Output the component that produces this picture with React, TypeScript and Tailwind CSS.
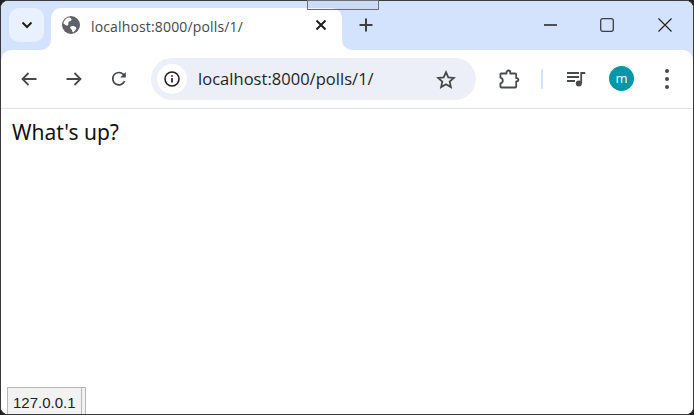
import { ReactNode } from "react";

function ToolButton({ className = "", children }: { className?: string; children: ReactNode }) {
  return <div className={`flex items-center justify-center shrink-0 ${className}`}>{children}</div>;
}

function TabBar() {
  return (
    <div className="h-[49px] flex bg-[#d3e3fd] pt-[7px] shrink-0">
      <div className="ml-[8px] mr-[7px] w-[35px] h-[34px] rounded-[10px] bg-[#e9f1fe] flex items-center justify-center shrink-0">
        <svg width="12" height="8" viewBox="0 0 12 8" fill="none">
          <path d="M1.5 1.5 6 6l4.5-4.500" stroke="#1f1f1f" strokeWidth="2" />
        </svg>
      </div>
      <div className="relative w-[291px] h-[42px] bg-white rounded-t-[10px] flex items-center pl-[11px] shrink-0">
        <div className="absolute -left-[10px] bottom-0 w-[10px] h-[10px] bg-white">
          <div className="w-full h-full bg-[#d3e3fd] rounded-br-[10px]" />
        </div>
        <div className="absolute -right-[10px] bottom-0 w-[10px] h-[10px] bg-white">
          <div className="w-full h-full bg-[#d3e3fd] rounded-bl-[10px]" />
        </div>
        <svg width="18" height="18" viewBox="0 0 18 18" className="shrink-0 -mt-[9px]">
          <circle cx="9" cy="9" r="9" fill="#5f6368" />
          <path d="M7 1.200C8.500 2 10 2.500 9.500 4 9 5.500 7.200 5 6.500 6.200 6 7.200 6.800 8.300 6 9.200 5 10 3.500 9.500 1.300 7.200 2 4.200 4.200 2 7 1.200ZM9.500 10.200c1.500-.4 3.500.2 4.700 1.300.6.7-.2 2.500-3 5-.8-.3-1-1.200-1.200-2.200-.2-1.200-1.700-1.600-1.800-2.600 0-.7.5-1.200 1.300-1.500Z" fill="#fff" />
        </svg>
        <span className="ml-[11px] text-[14px] tracking-[0.15px] text-[#45484c] font-['Open_Sans',sans-serif] whitespace-nowrap -mt-[5px]">localhost:8000/polls/1/</span>
        <svg width="12" height="12" viewBox="0 0 12 12" className="absolute left-[264px] top-[11px]" fill="none">
          <path d="M1.500 1.500l9 9M10.500 1.500l-9 9" stroke="#1f1f1f" strokeWidth="2" />
        </svg>
      </div>
      <ToolButton className="ml-[16px] w-[16px] h-[34px]">
        <svg width="14" height="14" viewBox="0 0 14 14" fill="none">
          <path d="M7 .5v13M.5 7h13" stroke="#3d4043" strokeWidth="2" />
        </svg>
      </ToolButton>
      <div className="ml-auto flex h-[34px] items-center mr-[21px]">
        <svg width="13" height="2" viewBox="0 0 13 2">
          <path d="M0 1h13" stroke="#1f1f1f" strokeWidth="1.500" />
        </svg>
        <svg width="14" height="14" viewBox="0 0 14 14" fill="none" className="ml-[43px]">
          <rect x=".7" y=".7" width="12.600" height="12.600" rx="2" stroke="#3a3f46" strokeWidth="1.300" />
        </svg>
        <svg width="14" height="14" viewBox="0 0 14 14" fill="none" className="ml-[44px]">
          <path d="M.5.5l13 13M13.500.5l-13 13" stroke="#1f1f1f" strokeWidth="1.100" />
        </svg>
      </div>
    </div>
  );
}

function Toolbar() {
  return (
    <div className="bg-[#d3e3fd] shrink-0">
      <div className="h-[58px] bg-white rounded-t-[10px] flex items-center">
        <ToolButton className="ml-[19px] w-[18px] h-[18px]">
          <svg width="16" height="14" viewBox="0 0 16 14" fill="none">
            <path d="M15.500 7H1.500M7.500 1 1.500 7l6 6" stroke="#474a4d" strokeWidth="1.800" />
          </svg>
        </ToolButton>
        <ToolButton className="ml-[27px] w-[18px] h-[18px]">
          <svg width="16" height="14" viewBox="0 0 16 14" fill="none">
            <path d="M.5 7h14M8.500 1l6 6-6 6" stroke="#474a4d" strokeWidth="1.800" />
          </svg>
        </ToolButton>
        <ToolButton className="ml-[27px] w-[18px] h-[18px]">
          <svg width="16" height="16" viewBox="0 0 16 16" fill="none">
            <path d="M13.600 10.200A6.200 6.200 0 1 1 12.400 3.400L14 5" stroke="#474a4d" strokeWidth="1.700" />
            <path d="M14.800 1v5.600H9.200L14.800 1Z" fill="#474a4d" />
          </svg>
        </ToolButton>
        <div className="ml-[23px] w-[325px] h-[42px] rounded-[21px] bg-[#ecEFF7] flex items-center pl-[6px] shrink-0">
          <div className="w-[30px] h-[30px] rounded-full bg-white flex items-center justify-center shrink-0">
            <svg width="16" height="16" viewBox="0 0 16 16" fill="none">
              <circle cx="8" cy="8" r="7" stroke="#1f1f1f" strokeWidth="1.600" />
              <path d="M8 7v4.600" stroke="#1f1f1f" strokeWidth="1.700" />
              <path d="M8 4.200v1.600" stroke="#1f1f1f" strokeWidth="1.700" />
            </svg>
          </div>
          <span className="ml-[11px] text-[16.5px] tracking-[0.03px] text-[#1f1f1f] font-['Open_Sans',sans-serif] whitespace-nowrap">localhost:8000/polls/1/</span>
          <svg width="20" height="19" viewBox="0 0 20 19" fill="none" className="ml-auto mr-[20px] shrink-0">
            <path d="M10 2.200l2.300 5.200 5.600.5-4.200 3.700 1.200 5.500L10 14.200l-4.900 2.900 1.200-5.500L2.100 7.900l5.600-.5L10 2.200Z" stroke="#474a4d" strokeWidth="1.800" />
          </svg>
        </div>
        <ToolButton className="ml-[23px] w-[21px] h-[21px]">
          <svg width="21" height="21" viewBox="0 0 21 21" fill="none">
            <path d="M2 4.500h5.500V3.400a1.900 1.900 0 0 1 3.800 0v1.100h4.900a1 1 0 0 1 1 1v3.600h.6a1.600 1.600 0 0 1 0 3.200h-.6v5.200a1 1 0 0 1-1 1H2.400a1 1 0 0 1-1-1v-3.200c1.600-.2 2.400-1.200 2.400-2.500S3 8.900 1.400 8.700V5.100a.6.6 0 0 1 .6-.6Z" stroke="#474a4d" strokeWidth="1.800" strokeLinejoin="round" />
          </svg>
        </ToolButton>
        <div className="ml-[21px] w-[2px] h-[20px] bg-[#d3e3fd] shrink-0" />
        <ToolButton className="ml-[23px] w-[20px] h-[20px] -mt-[1px]">
          <svg width="20" height="16" viewBox="0 0 20 16" fill="none">
            <path d="M1 2h12M1 6h12M1 10h8" stroke="#474a4d" strokeWidth="1.800" />
            <path d="M15.200 12V2h4" stroke="#474a4d" strokeWidth="1.800" />
            <circle cx="12.800" cy="12.600" r="3" fill="#474a4d" />
          </svg>
        </ToolButton>
        <div className="ml-[23px] w-[25px] h-[25px] rounded-full bg-[#0097a7] text-white flex items-center justify-center text-[13px] font-['Open_Sans',sans-serif] shrink-0 -mt-[1px]">m</div>
        <div className="ml-[31px] flex flex-col gap-[4px] shrink-0">
          <div className="w-[4px] h-[4px] rounded-full bg-[#474a4d]" />
          <div className="w-[4px] h-[4px] rounded-full bg-[#474a4d]" />
          <div className="w-[4px] h-[4px] rounded-full bg-[#474a4d]" />
        </div>
      </div>
    </div>
  );
}

export default function App() {
  return (
    <div className="relative w-[694px] h-[415px] bg-[#202020] overflow-hidden">
      <div className="w-full h-full rounded-[8px] border border-[#3a3a3a] bg-white overflow-hidden flex flex-col">
        <TabBar />
        <Toolbar />
        <div className="border-t border-[#e2e2e2] flex-1 bg-white pl-[11px] pt-[9px]">
          <p className="text-[21px] leading-[28px] text-[#111] font-['Noto_Sans',sans-serif]">What's up?</p>
        </div>
      </div>
      {/* ghost window edge peeking in at the top */}
      <div className="absolute left-[307px] top-0 w-[72px] h-[10px] bg-[#8fa3c4]/10 border border-[#6a6e76]" />
      {/* status bubble */}
      <div className="absolute left-[7px] bottom-[1px] w-[79px] h-[27px] bg-[#f2f2f2] border border-b-0 border-[#b8b8b8]">
        <div className="h-full w-[74px] border-r border-[#b8b8b8] flex items-center pl-[5px] pt-[4px] text-[15px] text-[#222] font-['Liberation_Sans',sans-serif]">127.0.0.1</div>
      </div>
    </div>
  );
}
